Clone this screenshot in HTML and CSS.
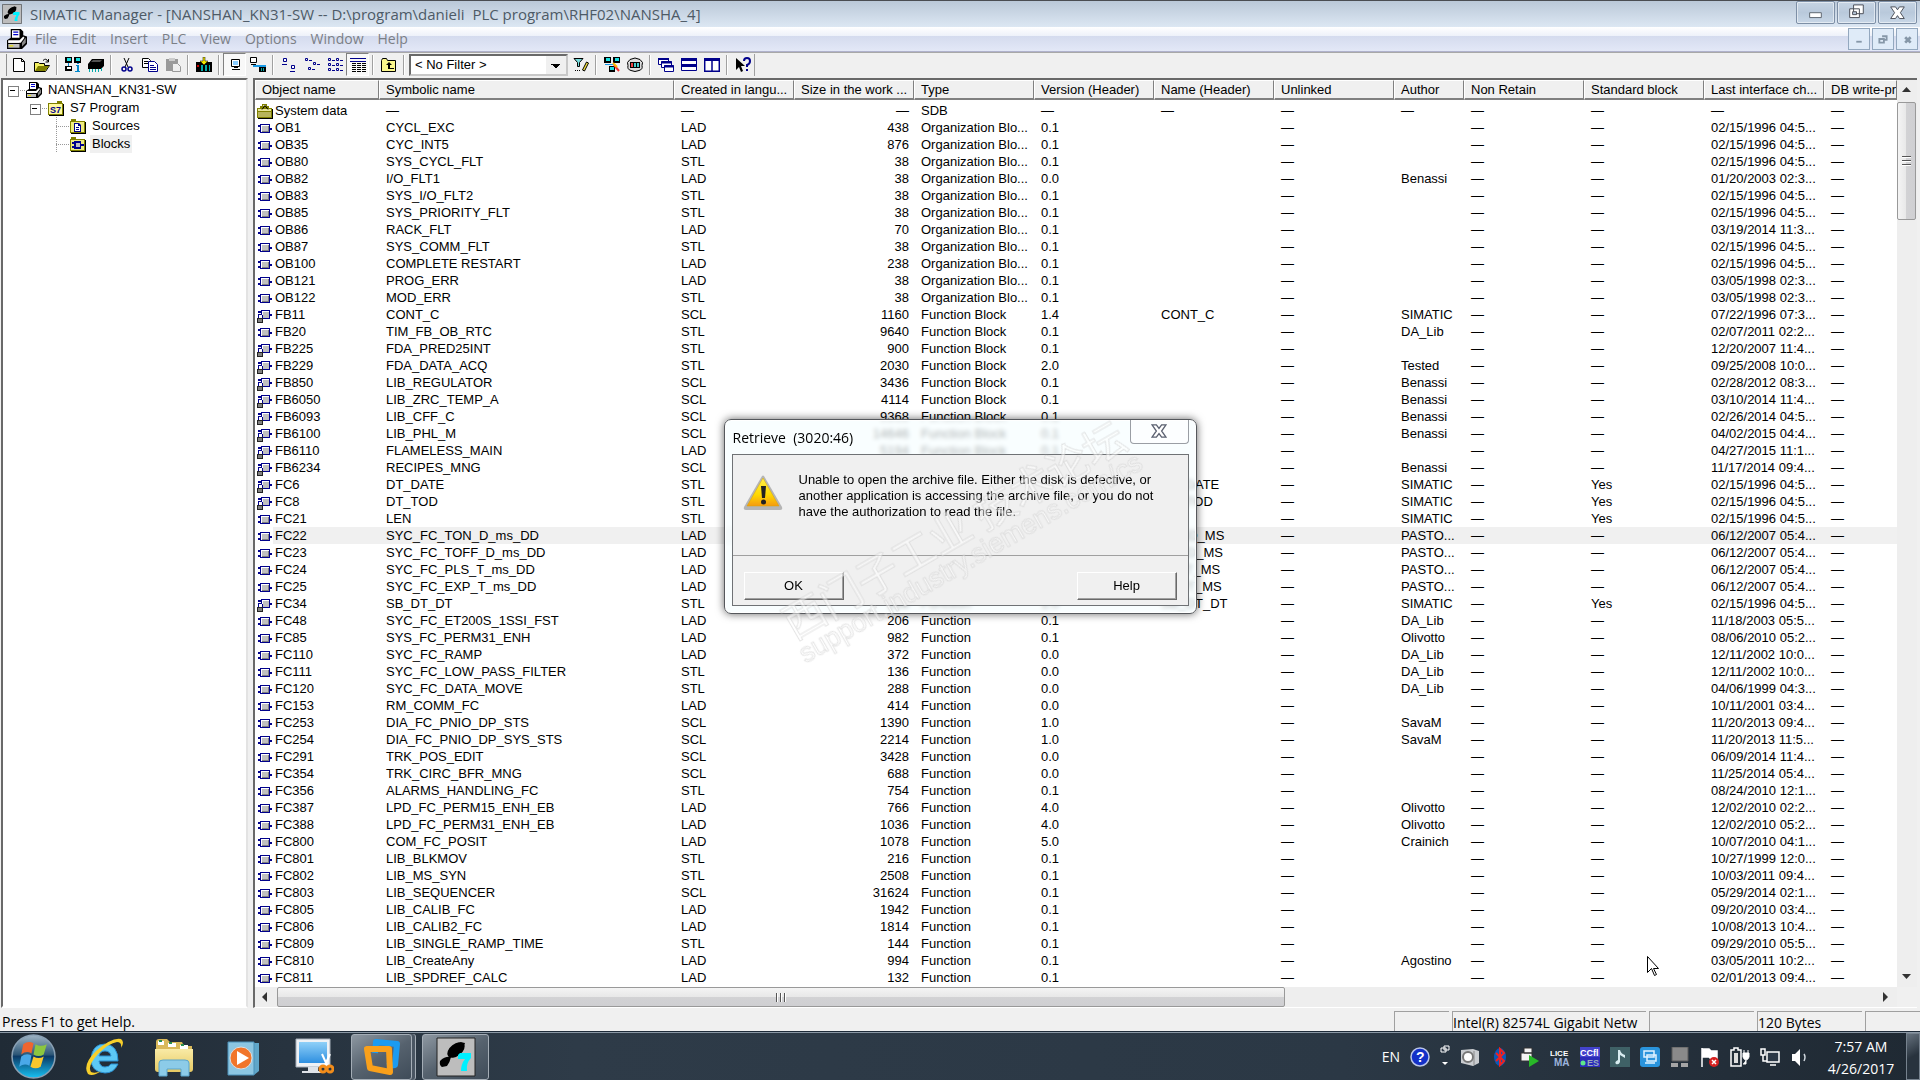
FILE: index.html
```
<!DOCTYPE html>
<html lang="en">
  <head>
    <meta charset="UTF-8" />
    <meta name="viewport" content="width=device-width, initial-scale=1.0" />
    <title>SIMATIC Manager</title>
    <link rel="stylesheet" href="styles.css">
  </head>
  <body>
    <!-- gradients -->
    <svg class="gradients" aria-hidden="true">
      <defs>
        <linearGradient id="gOrb" x1="0" y1="0" x2="0" y2="1">
          <stop offset="0" stop-color="#9fb4c4" /><stop offset=".45" stop-color="#2f5878" />
          <stop offset=".5" stop-color="#0c3a66" /><stop offset="1" stop-color="#17c3f5" />
        </linearGradient>
        <linearGradient id="gFold" x1="0" y1="0" x2="0" y2="1">
          <stop offset="0" stop-color="#f9eba6" /><stop offset="1" stop-color="#e6c963" />
        </linearGradient>
        <linearGradient id="gBlue" x1="0" y1="0" x2="0" y2="1">
          <stop offset="0" stop-color="#8fd0f8" /><stop offset="1" stop-color="#2e8fe0" />
        </linearGradient>
        <linearGradient id="gWarn" x1="0" y1="0" x2="0" y2="1">
          <stop offset="0" stop-color="#fff04a" /><stop offset=".6" stop-color="#ffd800" />
          <stop offset="1" stop-color="#f59a10" />
        </linearGradient>
      </defs>
    </svg>
    <!-- icon sprite -->
    <svg class="sprite" aria-hidden="true">
      <symbol id="i-block" viewBox="0 0 16 16">
        <path fill="#00008b" d="M3 4h10v9H3zM1 5h2v2H1zM1 10h2v2H1zM13 8h2v2h-2z" />
        <path fill="#fff" d="M4 5h8v7H4z" /><path fill="#808080" d="M5 6h7v6H5z" /><path fill="#c0c0c0" d="M5 6h6v5H5z" />
      </symbol>
      <symbol id="i-lock" viewBox="0 0 16 16">
        <path fill="#00008b" d="M4 3h9v9H4zM1 4h3v2H1zM13 7h2v2h-2z" />
        <path fill="#fff" d="M5 4h7v7H5z" /><path fill="#c0c0c0" d="M6 5h6v6H6z" />
        <path fill="#00008b" d="M1 7h4v1H1zM1 8h1v3H1zM5 8h1v3H5z" /><path fill="#fff" d="M2 8h3v3H2z" />
        <path fill="#222" d="M0 11h6v5H0z" /><path fill="#808080" d="M1 12h4v3H1z" />
      </symbol>
      <symbol id="i-sys" viewBox="0 0 16 16">
        <path fill="#000" d="M1 6h15v10H1z" /><path fill="#808000" d="M0 5h15v10H0zM3 3h9v3H3zM5 1h5v2H5z" />
        <path fill="#e8e49a" d="M1 6h13v2H1zM6 2h3v1H6z" /><path fill="#b8b45a" d="M1 9h13v5H1z" />
        <path stroke="#000" fill="none" d="M5 6.500l3-4 3 4" />
      </symbol>
      <symbol id="i-print" viewBox="0 0 16 16">
        <path fill="#000" d="M3 0h8l2 2v3l3 1v6l-4 4H0V9l3-2z" /><path fill="#fff" d="M4 1h6v6H4zM1 10h9v1H1z" />
        <path fill="#00c" d="M5 2h4v1H5zM5 4h4v1H5z" /><path fill="#fff" d="M1 9h9l3-3 1 1-3 4H1z" /><path fill="#c0c0c0" d="M1 12h9v3H1z" />
        <path fill="#e8e000" d="M2 13h3v1H2z" /><path fill="#888" d="M12 11l3-4v4l-3 3z" />
      </symbol>
      <symbol id="i-s7" viewBox="0 0 16 16">
        <path fill="#000" d="M1 4h15v12H1z" /><path fill="#808000" d="M0 3h15v12H0zM9 1h5v2H9z" /><path fill="#fff9a0" d="M1 4h13v10H1z" />
        <text x="2" y="13" font-size="9" font-weight="700" fill="#00008b" font-family="Liberation Sans, sans-serif">S7</text>
      </symbol>
      <symbol id="i-src" viewBox="0 0 16 16">
        <path fill="#000" d="M1 4h15v12H1z" /><path fill="#808000" d="M0 3h15v12H0zM1 1h5v2H1z" /><path fill="#f0ec80" d="M1 4h13v10H1z" />
        <path fill="#00008b" d="M4 5h5l2 2v7H4z" /><path fill="#fff" d="M5 6h3v2h2v5H5z" /><path fill="#00008b" d="M6 9h3v1H6zM6 11h3v1H6z" />
      </symbol>
      <symbol id="i-blk" viewBox="0 0 16 16">
        <path fill="#000" d="M1 4h15v12H1z" /><path fill="#808000" d="M0 3h15v12H0zM1 1h5v2H1z" /><path fill="#f0ec80" d="M1 4h13v10H1z" />
        <path fill="#00008b" d="M4 5h7v8H4zM2 6h2v2H2zM2 10h2v2H2zM11 8h3v2h-3z" /><path fill="#c0c0c0" d="M6 7h4v4H6z" />
      </symbol>
      <symbol id="i-app" viewBox="0 0 40 40">
        <path fill="#bdbdbd" stroke="#222" stroke-width="1" d="M1 1h38v38H1z" />
        <ellipse cx="20" cy="13" rx="10" ry="6" transform="rotate(-38 20 13)" />
        <path fill="#000" d="M24 5l5 1-2 6zM4 24q5-5 11-4-1 5-4 9l-5 1q-3-2-2-6z" />
        <path fill="#00f0ff" d="M22 18l2-2h11v5q-5 5-4 13h-6q0-7 4-12h-7z" />
      </symbol>
    </svg>

    <main class="window">
      <header class="titlebar">
        <svg class="app-icon"><use href="#i-app" /></svg>
        <h1 class="title">SIMATIC Manager - [NANSHAN_KN31-SW -- D:\program\danieli&nbsp; PLC program\RHF02\NANSHA_4]</h1>
        <div class="caption-buttons">
          <button type="button" aria-label="Minimize"><svg viewBox="0 0 38 22"><path d="M13 11h12v5H13z" fill="#fff" stroke="#5d6670" /></svg></button>
          <button type="button" aria-label="Restore"><svg viewBox="0 0 38 22"><path d="M16 3h10v9H16zM12 7h10v9H12z" fill="#fff" stroke="#4b4f58" /><path d="M15 10h4v3h-4z" fill="#b8c8da" stroke="#4b4f58" /></svg></button>
          <button type="button" aria-label="Close"><svg viewBox="0 0 38 22"><path d="M12 5h5l2 3 2-3h5l-4 6 4 6h-5l-2-3-2 3h-5l4-6z" fill="#fff" stroke="#4b4f58" /></svg></button>
        </div>
      </header>

      <nav class="menubar">
        <svg class="menu-icon"><use href="#i-print" /></svg>
        <button type="button">File</button>
        <button type="button">Edit</button>
        <button type="button">Insert</button>
        <button type="button">PLC</button>
        <button type="button">View</button>
        <button type="button">Options</button>
        <button type="button">Window</button>
        <button type="button">Help</button>
        <div class="child-buttons">
          <button type="button" aria-label="Minimize window"><svg viewBox="0 0 22 22"><path d="M8 13h6v2H8z" fill="#8697a8" /></svg></button>
          <button type="button" aria-label="Restore window"><svg viewBox="0 0 22 22"><path d="M10 8h5v4h-2M7 11h5v4H7z" fill="none" stroke="#8697a8" stroke-width="2" /></svg></button>
          <button type="button" aria-label="Close window"><svg viewBox="0 0 22 22"><path d="M9 9l6 6M15 9l-6 6" stroke="#8697a8" stroke-width="3" /></svg></button>
        </div>
      </nav>

      <div class="toolbar">
        <button type="button" aria-label="New"><svg viewBox="0 0 16 16"><path fill="#fff" stroke="#000" d="M2.500 1.500h8l3 3v10h-11zM10.500 1.500v3h3" /></svg></button>
        <button type="button" aria-label="Open"><svg viewBox="0 0 16 16"><path fill="#f4f060" stroke="#000" d="M.5 14.500v-9h4l1 1h5v2h5l-4 6z" /><path fill="#808000" d="M4 9h11l-4 5H1z" /><path fill="none" stroke="#000" d="M9 3.500q3-3 5 1M14.500 2v3h-3" /></svg></button>
        <span class="sep"></span>
        <button type="button" aria-label="Accessible nodes"><svg viewBox="0 0 16 16"><path fill="#000" d="M0 0h7v6H0zM9 0h7v6H9zM0 9h7v5H0z" /><path fill="#19e0e0" d="M2 1h4v3H2zM11 1h4v3h-4z" /><path fill="#fff" d="M2 10h4v2H2z" /><path fill="#08c" d="M3 6h1v3H3zM11 8h3v6h1v1h-5v-1h2V9h-1zM12 6h2v1h-2z" /></svg></button>
        <button type="button" aria-label="Memory card"><svg viewBox="0 0 16 16"><path fill="#000" d="M4 2h12v7l-3 3H0V7z" /><path fill="#0aa" d="M1 12h1v3H1zM4 12h1v3H4zM7 12h1v3H7zM10 12h1v3h-1zM13 11h1v3h-1z" /><path fill="#ccc" d="M5 3h9l-2 2H3z" opacity=".4" /></svg></button>
        <span class="sep"></span>
        <button type="button" aria-label="Cut"><svg viewBox="0 0 16 16"><path fill="none" stroke="#000" d="M5 1l4 9M10 1L6 10" /><g fill="none" stroke="#00008b" stroke-width="1.500"><circle cx="5" cy="12" r="2" /><circle cx="11" cy="12" r="2" /></g></svg></button>
        <button type="button" aria-label="Copy"><svg viewBox="0 0 16 16"><path fill="#fff" stroke="#000" d="M.5 1.500h6l2 2v7h-8z" /><path fill="#fff" stroke="#00008b" d="M6.500 4.500h6l3 3v7h-9z" /><path stroke="#00008b" d="M8 8.500h4M8 10.500h6M8 12.500h6" /><path stroke="#000" d="M2 4.500h4M2 6.500h4" /></svg></button>
        <button type="button" aria-label="Paste" disabled><svg viewBox="0 0 16 16"><path fill="#999" d="M1 2h12v12H1z" /><path fill="#ccc" d="M4 1h6v3H4z" /><path fill="#eee" stroke="#999" d="M7.500 6.500h5l3 3v5h-8z" /></svg></button>
        <span class="sep"></span>
        <button type="button" aria-label="Download"><svg viewBox="0 0 16 16"><path fill="#000" d="M0 5h16v10H0z" /><path fill="#0aa" d="M5 8h2v6H5zM9 8h2v6H9zM13 8h1v6h-1z" /><path fill="#c00" d="M1 8h2v2H1z" /><path fill="#f4e800" stroke="#000" stroke-width=".5" d="M7 0h2v4h3L8 8 4 4h3z" /></svg></button>
        <span class="sep"></span>
        <button type="button" aria-label="Offline" class="pressed"><svg viewBox="0 0 16 16"><path fill="#fff" stroke="#000" d="M4.500 2.500h8v7h-8z" /><path fill="#8cf" d="M6 4h5v4H6z" /><path stroke="#000" d="M7 10.500h4M5 12.500h8" /></svg></button>
        <button type="button" aria-label="Online"><svg viewBox="0 0 16 16"><path fill="#fff" stroke="#000" d="M.5.500h6v5h-6zM1 7.500h5" /><path fill="#1a9be8" d="M3 8h13v2H3z" /><path fill="#000" d="M9 10h7v5H9z" /><path fill="#0aa" d="M11 11h1v3h-1zM13 11h1v3h-1z" /></svg></button>
        <span class="sep"></span>
        <button type="button" aria-label="Large icons"><svg viewBox="0 0 16 16"><path fill="#fff" stroke="#00008b" d="M2.500 1.500h3v3h-3zM10.500 8.500h3v3h-3z" /><path stroke="#00008b" d="M1 7.500h5M9 14.500h5" /></svg></button>
        <button type="button" aria-label="Small icons"><svg viewBox="0 0 16 16"><path fill="none" stroke="#00008b" d="M1.500 1.500h2v2h-2zM9.500 5.500h2v2h-2zM4.500 10.500h2v2h-2z" /><path stroke="#00008b" d="M5 3.500h3M13 7.500h3M8 12.500h3" /></svg></button>
        <button type="button" aria-label="List"><svg viewBox="0 0 16 16"><path fill="none" stroke="#00008b" d="M1.500 1.500h2v2h-2zM9.500 1.500h2v2h-2zM1.500 6.500h2v2h-2zM9.500 6.500h2v2h-2zM1.500 11.500h2v2h-2zM9.500 11.500h2v2h-2z" /><path stroke="#00008b" d="M5 3.500h3M13 3.500h3M5 8.500h3M13 8.500h3M5 13.500h3M13 13.500h3" /></svg></button>
        <button type="button" aria-label="Details" class="pressed"><svg viewBox="0 0 16 16"><path stroke="#00008b" d="M0 1.500h16M0 4.500h16" /><path stroke="#000" stroke-dasharray="4 1" d="M2 6.500h14M2 8.500h14M2 10.500h14M2 12.500h14M2 14.500h14" /></svg></button>
        <span class="sep"></span>
        <button type="button" aria-label="Up one level"><svg viewBox="0 0 16 16"><path fill="#fbf78c" stroke="#000" d="M.5 14.500v-11l1-2h4l1 2h8v11z" /><path fill="#000" d="M8 5l3 3H9v3h4v1H7V8H5z" /></svg></button>
        <span class="sep"></span>
        <select class="filter" aria-label="Filter"><option>&lt; No Filter &gt;</option></select>
        <button type="button" aria-label="Edit filter"><svg viewBox="0 0 16 16"><path fill="#7dd" stroke="#000" d="M1 1.500h9l-3.500 4v4h-2v-4z" /><path stroke="#000" stroke-dasharray="1 1" d="M2 13.500h6" /><path fill="#f4e040" stroke="#000" d="M9.500 13l4-8 2 1-4 8z" /></svg></button>
        <span class="sep"></span>
        <button type="button" aria-label="Configure network"><svg viewBox="0 0 16 16"><path fill="#000" d="M0 0h7v6H0zM9 0h7v6H9zM5 9h6v6H5z" /><path fill="#19e0e0" d="M2 1h4v3H2zM11 1h4v3h-4zM6 10h4v3H6z" /><path fill="#1a9be8" d="M1 7h9v1H1z" /><path stroke="#e33" stroke-width="2" d="M10 8l5 6" /><path stroke="#fb0" stroke-width="2" d="M9 6l4 4" /></svg></button>
        <button type="button" aria-label="Simulate modules"><svg viewBox="0 0 16 16"><path fill="#ddd" stroke="#000" d="M3 2.500q5-3 10 0 4 3 2 6 1 4-3 5-4 2-8 0-4-1-3-5-2-3 2-6z" /><path fill="#000" d="M3 5h10v6H3z" /><path fill="#e44" d="M4 6h2v4H4z" /><path fill="#4cc" d="M7 6h2v4H7zM10 6h2v4h-2z" /></svg></button>
        <span class="sep"></span>
        <button type="button" aria-label="Cascade"><svg viewBox="0 0 16 16"><g fill="#fff" stroke="#00008b"><path d="M.5 1.500h10v6H.5z" /><path d="M3.500 4.500h10v6h-10z" /><path d="M6.500 8.500h9v6h-9z" /></g><path stroke="#00008b" stroke-width="2" d="M0 2h11M3 5.500h11M6 9.500h10" /></svg></button>
        <button type="button" aria-label="Tile horizontally"><svg viewBox="0 0 16 16"><path fill="#fff" stroke="#00008b" d="M.5 1.500h15v12H.5z" /><path stroke="#00008b" stroke-width="3" d="M0 2.500h16M0 8.500h16" /></svg></button>
        <button type="button" aria-label="Tile vertically"><svg viewBox="0 0 16 16"><path fill="#fff" stroke="#00008b" stroke-width="1.500" d="M.7 1.700h14.600v12.600H.7zM8 2v12" /><path stroke="#00008b" stroke-width="3" d="M0 2.500h16" /></svg></button>
        <span class="sep"></span>
        <button type="button" aria-label="Context help"><svg viewBox="0 0 16 16"><path fill="#000" d="M1 1v12l3-3 2 5 2-1-2-5h4z" /><path fill="none" stroke="#00008b" stroke-width="2" d="M9 4q0-3 3-3t3 3-3 4v2M12 12v2" /></svg></button>
        <span class="toolbar-end"></span>
      </div>

      <section class="workspace">
        <aside class="tree-pane">
          <ul class="tree">
            <li>
              <div class="node root"><span class="expander"></span><svg><use href="#i-print" /></svg><span class="label">NANSHAN_KN31-SW</span></div>
              <ul>
                <li>
                  <div class="node"><span class="expander"></span><svg><use href="#i-s7" /></svg><span class="label">S7 Program</span></div>
                  <ul class="leaves">
                    <li><div class="node"><span class="twig"></span><svg><use href="#i-src" /></svg><span class="label">Sources</span></div></li>
                    <li><div class="node"><span class="twig"></span><svg><use href="#i-blk" /></svg><span class="label selected">Blocks</span></div></li>
                  </ul>
                </li>
              </ul>
            </li>
          </ul>
        </aside>

        <div class="list-pane">
          <div class="list-body">
            <div class="list-view">
              <table class="blocks">
                <colgroup>
                  <col class="c-object"><col class="c-symbol"><col class="c-std"><col class="c-std"><col class="c-std">
                  <col class="c-std"><col class="c-std"><col class="c-std"><col class="c-author"><col class="c-std">
                  <col class="c-std"><col class="c-std"><col>
                </colgroup>
                <thead>
                  <tr>
                    <th>Object name</th><th>Symbolic name</th><th>Created in langu...</th><th>Size in the work ...</th><th>Type</th>
                    <th>Version (Header)</th><th>Name (Header)</th><th>Unlinked</th><th>Author</th><th>Non Retain</th>
                    <th>Standard block</th><th>Last interface ch...</th><th>DB write-pr</th>
                  </tr>
                </thead>
                <tbody id="blockRows"></tbody>
              </table>
            </div>
            <div class="hscroll">
              <span class="arrow"><svg viewBox="0 0 20 20"><path d="M12 5v10L7 10z" fill="#333" /></svg></span>
              <div class="htrack"><div class="hthumb"><i></i><i></i><i></i></div></div>
              <span class="arrow"><svg viewBox="0 0 20 20"><path d="M6 5v10l5-5z" fill="#333" /></svg></span>
            </div>
          </div>
          <div class="vscroll">
            <span class="arrow"><svg viewBox="0 0 20 20"><path d="M5 12h9L9.500 7z" fill="#333" /></svg></span>
            <div class="vtrack"><div class="vthumb"><i></i><i></i><i></i></div></div>
            <span class="arrow"><svg viewBox="0 0 20 20"><path d="M5 7h9l-4.500 5z" fill="#333" /></svg></span>
            <span class="corner"></span>
          </div>
        </div>
      </section>

      <footer class="statusbar">
        <span class="hint">Press F1 to get Help.</span>
        <span class="panel narrow"></span>
        <span class="panel adapter">Intel(R) 82574L Gigabit Netw</span>
        <span class="panel"></span>
        <span class="panel">120 Bytes</span>
        <span class="panel narrow"></span>
      </footer>

      <div class="dialog-layer">
        <div class="dialog" role="dialog" aria-labelledby="dlgTitle">
          <div class="dialog-title">
            <h2 id="dlgTitle">Retrieve&nbsp; (3020:46)</h2>
            <button type="button" class="dialog-close" aria-label="Close dialog"><svg viewBox="0 0 18 16"><path d="M1 1h5l3 4 3-4h5l-5 7 5 7h-5l-3-4-3 4H1l5-7z" fill="#fff" stroke="#5a6070" stroke-width="1.500" /></svg></button>
          </div>
          <div class="dialog-body">
            <div class="message">
              <svg class="warn" viewBox="0 0 40 36"><path d="M19 1q1-1 2 0l18 31q1 3-2 3H3q-3 0-2-3z" fill="#b5b5b5" /><path d="M20 3L36 31H4z" fill="url(#gWarn)" stroke="#d9a400" stroke-width=".5" /><path d="M18 11h5l-1 12h-3z" fill="#222" /><circle cx="20.500" cy="27" r="2.500" fill="#222" /></svg>
              <p>Unable to open the archive file. Either the disk is defective, or another application is accessing the archive file, or you do not have the authorization to read the file.</p>
            </div>
            <div class="actions">
              <button type="button">OK</button>
              <button type="button">Help</button>
            </div>
          </div>
        </div>
      </div>
    </main>

    <footer class="taskbar">
      <button type="button" class="start" aria-label="Start"><svg viewBox="0 0 44 44"><circle cx="22" cy="22" r="21" fill="url(#gOrb)" stroke="#8aa0b4" stroke-width="1.500" /><path d="M12 10q5-4 10-1l-2 10q-5-3-10 1z" fill="#f0652f" /><path d="M24 10q5 3 11 0l-3 10q-5 3-10 0z" fill="#8cc63f" /><path d="M10 22q5-4 10-1l-2 10q-5-3-10 1z" fill="#4aa8e8" /><path d="M22 22q5 3 10 0l-3 10q-5 3-10 0z" fill="#fbc72e" /></svg></button>
      <button type="button" class="pin" aria-label="Internet Explorer"><svg viewBox="0 0 40 40"><path d="M34 24H15q1 6 6 6 4 0 6-3h7q-4 9-13 9Q7 35 7 22 8 7 21 7q13 1 13 17zM15 19h12q-1-5-6-5t-6 5z" fill="#5cc8f5" stroke="#2b8fd0" /><path d="M4 37Q-2 28 12 14 28 0 37 2q4 3 0 9 1-6-4-6Q25 6 14 17 3 29 7 35q4 2 10-1-8 6-13 3z" fill="#f7cf2b" /></svg></button>
      <button type="button" class="pin" aria-label="Explorer"><svg viewBox="0 0 40 40"><path d="M2 5q0-3 3-3h8l3 3h12l2 4h8v24H2z" fill="#d9b95a" /><path d="M4 4h6v4H4zM14 6h8v4h-8zM26 8h8v4h-8z" fill="#fff" /><path d="M5 3h3v2H5zM15 5h3v2h-3zM27 7h3v2h-3z" fill="#2a8f50" /><path d="M1 12h38v20q0 3-3 3H4q-3 0-3-3z" fill="url(#gFold)" /><path d="M5 26q0-3 4-3h22q4 0 4 3v13h-8v-7H13v7H5z" fill="#8ccbe8" stroke="#5aa5cc" /></svg></button>
      <button type="button" class="pin" aria-label="Media Player"><svg viewBox="0 0 40 40"><path d="M12 6h23v28l-5 4H12z" fill="#5fa6c9" /><path d="M4 5h26v33H4z" fill="#8cc6e2" stroke="#4a90b8" /><circle cx="17" cy="21" r="11" fill="#f1752a" stroke="#d9dfe4" /><path d="M13 14l12 7-12 7z" fill="#fff" /></svg></button>
      <button type="button" class="pin" aria-label="Snipping Tool"><svg viewBox="0 0 40 40"><path d="M2 2h34v28H2z" fill="#eef1f5" stroke="#a6afba" /><path d="M5 5h28v21H5z" fill="url(#gBlue)" /><path d="M14 30h10v4h6v2H8v-2h6z" fill="#dfe3e8" /><path d="M28 17l5 11M36 17l-5 11" stroke="#fff" stroke-width="2" /><g fill="none" stroke="#f28c1a" stroke-width="3"><circle cx="29" cy="32" r="3" /><circle cx="36" cy="32" r="3" /></g></svg></button>
      <button type="button" class="task stacked" aria-label="VMware"><svg viewBox="0 0 40 40"><g fill="none" stroke-width="6" stroke-linejoin="round"><path d="M13 16l1-11 21 2-2 21-8 1" stroke="#1b9bf0" /><path d="M5 12h22l1 23-20-4z" stroke="#f9a01b" /></g></svg></button>
      <button type="button" class="task" aria-label="SIMATIC Manager"><svg viewBox="0 0 40 40"><use href="#i-app" /></svg></button>

      <div class="tray">
        <span class="lang">EN</span>
        <svg class="tray-icon" viewBox="0 0 20 20"><circle cx="10" cy="10" r="9" fill="#1330c8" stroke="#b9c4e8" stroke-width="1.500" /><text x="6" y="15" font-size="14" font-weight="700" fill="#fff" font-family="Liberation Sans, sans-serif">?</text></svg>
        <svg class="tray-mini" viewBox="0 0 10 24"><path d="M4 1h5v4H4zM1 3h5v4H1z" fill="#2c3846" stroke="#fff" /><path d="M2 17h6l-3 3z" fill="#fff" /></svg>
        <svg class="tray-icon" viewBox="0 0 20 20"><path d="M1 3l12-1 6 2v12l-6 3-12-3z" fill="#c9ccd0" /><circle cx="8" cy="10" r="5" fill="#fff" stroke="#777" stroke-width="2" /><path d="M14 4v14" stroke="#888" /></svg>
        <svg class="tray-icon" viewBox="0 0 20 20"><ellipse cx="10" cy="10" rx="6" ry="9" fill="#0a58b8" /><path d="M6 6l8 8-4 4V2l4 4-8 8" fill="none" stroke="#e22" stroke-width="2" /></svg>
        <svg class="tray-icon" viewBox="0 0 20 20"><path d="M4 1h8v5H4zM1 6h11v8H1z" fill="#f4f4f4" stroke="#333" /><path d="M9 8l10 6-10 6z" fill="#28b828" /></svg>
        <svg class="tray-icon" viewBox="0 0 20 20"><text x="0" y="9" font-size="8" font-weight="700" fill="#fff" font-family="Liberation Sans, sans-serif">LICE</text><text x="4" y="19" font-size="10" font-weight="700" fill="#9db4dc" font-family="Liberation Sans, sans-serif">MA</text></svg>
        <svg class="tray-icon" viewBox="0 0 20 20"><path d="M0 0h20v20H0z" fill="#2b2bb8" /><path d="M0 0h20v10H0z" fill="#4343cc" /><text x="0" y="9" font-size="9" font-weight="700" fill="#fff" font-family="Liberation Sans, sans-serif">CCfl</text><text x="7" y="19" font-size="9" font-weight="700" fill="#9ab" font-family="Liberation Sans, sans-serif">ES</text><circle cx="3" cy="16" r="2.500" fill="#5fe88a" /></svg>
        <svg class="tray-icon" viewBox="0 0 20 20"><path d="M0 0h20v20H0z" fill="#3f6166" /><path d="M8 3h2q1 4 5 5v3l-5-3v7q-1 3-4 2-2-2 2-4z" fill="#d8ecf0" /></svg>
        <svg class="tray-icon" viewBox="0 0 20 20"><rect width="20" height="20" rx="3" fill="#2a94dc" /><path d="M4 4h10v6H4zM7 8h9v6H7zM5 16h10" fill="none" stroke="#dff2ff" stroke-width="1.500" /></svg>
        <svg class="tray-icon" viewBox="0 0 20 20"><path d="M2 0h16v14H2z" fill="#8a8a8a" stroke="#5a5a5a" /><path d="M1 16h7v4H1zM11 16h7v4h-7z" fill="#a5a5a5" /></svg>
        <svg class="tray-icon" viewBox="0 0 20 20"><path d="M2 1v19M3 2h6l2 2h6v8h-6l-2-2H3z" fill="#fff" stroke="#fff" stroke-width="1.500" /><circle cx="14" cy="15" r="5" fill="#d62222" /><path d="M12 13l4 4M16 13l-4 4" stroke="#fff" stroke-width="1.500" /></svg>
        <svg class="tray-icon" viewBox="0 0 20 20"><path d="M4 1h4v2h3v16H1V3h3z" fill="none" stroke="#fff" stroke-width="1.500" /><path d="M4 6h4v10H4z" fill="#ddd" /><path d="M13 6h6v4q-1 3-3 3-2 0-3-3zM14 3v3M18 3v3M16 13v4h-3" fill="#fff" stroke="#fff" /></svg>
        <svg class="tray-icon" viewBox="0 0 20 20"><path d="M1 2h4v6H1zM3 8v6h4" fill="none" stroke="#fff" stroke-width="1.500" /><path d="M7 5h12v10H7zM10 18h6" fill="#2c3846" stroke="#fff" stroke-width="1.500" /></svg>
        <svg class="tray-icon" viewBox="0 0 20 20"><path d="M2 7h3l5-5v17l-5-5H2z" fill="#fff" /><path d="M14 7q2 3 0 7" fill="none" stroke="#cfd6dd" stroke-width="1.500" /></svg>
      </div>
      <div class="clock"><span>7:57 AM</span><span>4/26/2017</span></div>
      <button type="button" class="show-desktop" aria-label="Show desktop"></button>
    </footer>

    <div class="watermark"><span class="wm-cn" lang="zh">西门子工业 技术论坛</span><span class="wm-url">support.industry.siemens.com/cs</span></div>
    <svg class="pointer" viewBox="0 0 12 20"><path d="M.5.500v16l4-4 3 7 2-1-3-6h5z" fill="#fff" stroke="#000" /></svg>

    <script src="script.js"></script>
  </body>
</html>
```
FILE: styles.css
```
* {
  box-sizing: border-box;
}
body {
  margin: 0;
  height: 100vh;
  display: flex;
  flex-direction: column;
  position: relative;
  overflow: hidden;
  background: #f0f0f0;
  color: #000;
  font: 13px/17px "Liberation Sans", Arial, sans-serif;
}
button {
  margin: 0;
  padding: 0;
  border: 0;
  background: none;
  font: inherit;
  color: inherit;
}
svg {
  display: block;
}
ul {
  list-style: none;
  margin: 0;
  padding: 0;
}
.gradients {
  position: absolute;
  width: 0;
  height: 0;
}
.sprite {
  display: none;
}

/* main window */
.window {
  flex: 1;
  min-height: 0;
  display: flex;
  flex-direction: column;
  position: relative;
}
.titlebar {
  display: flex;
  align-items: center;
  height: 27px;
  padding: 0 3px 0 2px;
  border-top: 1px solid #4a4d52;
  background: linear-gradient(#bac8d8, #dce7f3);
}
.app-icon {
  width: 20px;
  height: 20px;
}
.title {
  flex: 1;
  margin: 0 0 0 8px;
  font: 15px/20px "Open Sans", "Noto Sans", sans-serif;
  color: #4d5a66;
}
.caption-buttons {
  display: flex;
  gap: 2px;
  align-self: flex-start;
}
.caption-buttons button {
  width: 39px;
  height: 23px;
  border: 1px solid #7d8fa6;
  border-radius: 2px;
  background: linear-gradient(#c6d4e3, #b9c9db 50%, #c8d7e7);
  box-shadow: inset 0 0 0 1px rgba(255, 255, 255, 0.5);
}
.menubar {
  display: flex;
  align-items: center;
  gap: 14px;
  height: 25px;
  padding: 0 2px 0 7px;
  border-bottom: 1px solid #b0b2cc;
  background: linear-gradient(#fff, #eef2fa 36%, #d4dbee 37%, #e3e8f7);
  font: 14px/22px "Open Sans", "Noto Sans", sans-serif;
  color: #7b7f86;
}
.menu-icon {
  width: 20px;
  height: 20px;
  margin-right: -6px;
}
.child-buttons {
  display: flex;
  gap: 2px;
  margin-left: auto;
}
.child-buttons button {
  width: 22px;
  height: 22px;
  border: 1px solid #93a8bf;
  background: #dfebf8;
}
.toolbar {
  display: flex;
  align-items: center;
  height: 26px;
  padding: 0 0 2px 3px;
  border-top: 1px solid #a8a8a8;
}
.toolbar::before {
  content: "";
  width: 3px;
  height: 22px;
  border-right: 1px solid #909090;
}
.toolbar button {
  display: flex;
  align-items: center;
  justify-content: center;
  width: 23px;
  height: 23px;
}
.toolbar button svg {
  width: 16px;
  height: 16px;
}
.toolbar .pressed {
  border: 1px solid;
  border-color: #808080 #fff #fff #808080;
  background: #f8f8f8;
}
.sep {
  width: 2px;
  height: 20px;
  margin: 0 3px;
  border-left: 1px solid #a0a0a0;
  border-right: 1px solid #fff;
}
.filter {
  width: 159px;
  height: 22px;
  margin: 0 1px 0 1px;
  padding: 0 4px;
  appearance: none;
  border: 2px solid;
  border-color: #696969 #c8c8c8 #c8c8c8 #696969;
  border-radius: 0;
  background:
    linear-gradient(45deg, transparent 50%, #000 50%) right 10px top 8px / 5px 5px no-repeat,
    linear-gradient(-45deg, transparent 50%, #000 50%) right 5px top 8px / 5px 5px no-repeat,
    linear-gradient(#f0f0f0, #f0f0f0) right / 20px 100% no-repeat,
    #fff;
  color: #000;
  font: 13px/18px "Liberation Sans", Arial, sans-serif;
}
.toolbar-end {
  width: 1px;
  height: 22px;
  background: #a0a0a0;
}

/* project tree and block list */
.workspace {
  flex: 1;
  min-height: 0;
  display: flex;
  gap: 5px;
  padding: 0 3px 1px 1px;
}
.tree-pane,
.list-pane {
  border: 2px solid;
  border-color: #696969 #e3e3e3 #fff #696969;
  background: #fff;
}
.tree-pane {
  width: 247px;
  padding: 1px 0 0 5px;
}
.node {
  display: flex;
  align-items: center;
  height: 18px;
}
.node svg {
  width: 16px;
  height: 16px;
}
.node .label {
  margin-left: 4px;
  padding: 0 2px;
  line-height: 18px;
}
.node .selected {
  background: #f0f0f0;
}
.tree ul {
  padding-left: 22px;
}
.tree .leaves {
  margin-left: 26px;
  padding-left: 0;
  background: linear-gradient(#999 50%, transparent 50%) 0 0 / 1px 2px repeat-y;
  background-clip: content-box;
}
.expander {
  width: 18px;
  height: 9px;
  background: linear-gradient(90deg, #999 50%, transparent 50%) 10px 4px / 2px 1px repeat-x;
  position: relative;
}
.expander::before {
  content: "";
  position: absolute;
  left: 0;
  top: 0;
  width: 9px;
  height: 9px;
  border: 1px solid #808080;
  background: linear-gradient(#000, #000) 1px 3px / 5px 1px no-repeat #fff;
}
.twig {
  width: 14px;
  height: 1px;
  background: linear-gradient(90deg, #999 50%, transparent 50%) 0 0 / 2px 1px repeat-x;
}
.list-pane {
  flex: 1;
  min-width: 0;
  display: flex;
  border-right-width: 0;
  border-bottom-width: 1px;
}
.list-body {
  flex: 1;
  min-width: 0;
  display: flex;
  flex-direction: column;
}
.list-view {
  flex: 1;
  min-height: 0;
  overflow: hidden;
}
.blocks {
  width: 100%;
  table-layout: fixed;
  border-collapse: separate;
  border-spacing: 0;
}
.c-object {
  width: 124px;
}
.c-symbol {
  width: 295px;
}
.c-std {
  width: 120px;
}
.c-author {
  width: 70px;
}
.blocks th {
  height: 20px;
  padding: 0 0 0 6px;
  border-top: 1px solid #fff;
  border-left: 1px solid #fff;
  border-right: 1px solid #808080;
  border-bottom: 2px solid #808080;
  background: #f0f0f0;
  font-weight: normal;
  text-align: left;
  white-space: nowrap;
  overflow: hidden;
}
.blocks td {
  height: 17px;
  padding: 0 0 0 7px;
  white-space: nowrap;
  overflow: hidden;
}
.blocks tbody::before {
  content: "";
  display: table-row;
  height: 2px;
}
.blocks .object {
  display: flex;
  align-items: center;
  padding-left: 2px;
}
.blocks .object svg {
  width: 16px;
  height: 16px;
}
.blocks .object span {
  flex: 1;
  padding-left: 2px;
}
.blocks .size {
  padding: 0 5px 0 0;
  text-align: right;
}
.blocks .current td:not(.object),
.blocks .current .object span {
  background: #f0f0f0;
}
.hscroll {
  display: flex;
  height: 20px;
  background: #eee;
}
.arrow {
  width: 20px;
  height: 20px;
}
.htrack {
  flex: 1;
  display: flex;
  padding-left: 2px;
}
.hthumb,
.vthumb {
  display: flex;
  align-items: center;
  justify-content: center;
  gap: 2px;
  border: 1px solid #999;
  border-radius: 2px;
}
.hthumb {
  width: 63%;
  background: linear-gradient(#f4f4f4, #e8e8e8 48%, #d2d2d4 50%, #cfcfd2);
}
.hthumb i {
  width: 2px;
  height: 9px;
  border-left: 1px solid #555;
  border-right: 1px solid #fff;
}
.vscroll {
  width: 20px;
  display: flex;
  flex-direction: column;
  background: #eee;
}
.vtrack {
  flex: 1;
  padding-top: 2px;
}
.vthumb {
  flex-direction: column;
  width: 19px;
  height: 118px;
  background: linear-gradient(90deg, #f4f4f4, #e8e8e8 48%, #d2d2d4 50%, #cfcfd2);
}
.vthumb i {
  width: 9px;
  height: 2px;
  border-top: 1px solid #555;
  border-bottom: 1px solid #fff;
}
.corner {
  height: 20px;
  background: #f0f0f0;
}

.statusbar {
  display: flex;
  gap: 3px;
  height: 23px;
  padding-top: 2px;
  font: 14px/21px "Open Sans", "Noto Sans", sans-serif;
}
.hint {
  flex: 1;
  padding-left: 2px;
}
.panel {
  width: 105px;
  height: 20px;
  border-top: 1px solid #a0a0a0;
  border-left: 1px solid #a0a0a0;
  white-space: nowrap;
  overflow: hidden;
}
.panel.narrow {
  width: 55px;
}
.panel.adapter {
  width: 194px;
}

/* message box */
.dialog-layer {
  position: absolute;
  inset: 0;
  display: flex;
  align-items: center;
  justify-content: center;
}
.dialog {
  width: 473px;
  padding: 0 7px 7px;
  border: 1px solid #55585c;
  border-radius: 7px;
  background: rgba(246, 253, 255, 0.7);
  backdrop-filter: blur(2px);
  box-shadow: 0 0 8px rgba(0, 0, 0, 0.6), inset 0 0 0 1px #fff;
}
.dialog-title {
  display: flex;
  justify-content: space-between;
  height: 34px;
}
.dialog-title h2 {
  margin: 7px 0 0 1px;
  font: 14px/22px "Open Sans", "Noto Sans", sans-serif;
}
.dialog-close {
  display: flex;
  align-items: center;
  justify-content: center;
  width: 59px;
  height: 24px;
  border: 1px solid #9a9ea4;
  border-top: 0;
  border-radius: 0 0 4px 4px;
  background: rgba(255, 255, 255, 0.6);
}
.dialog-close svg {
  width: 16px;
  height: 14px;
}
.dialog-body {
  border: 1px solid #6f7275;
  background: #f0f0f0;
}
.message {
  display: flex;
  gap: 16px;
  height: 101px;
  padding: 17px 15px 0 10px;
  border-bottom: 1px solid #a0a0a0;
}
.message p {
  flex: 1;
  margin: 0;
  line-height: 16px;
}
.warn {
  width: 40px;
  height: 36px;
  margin-top: 3px;
}
.actions {
  display: flex;
  justify-content: space-between;
  padding: 16px 11px 5px;
}
.actions button {
  width: 100px;
  height: 28px;
  border: 1px solid;
  border-color: #fff #696969 #696969 #fff;
  box-shadow: inset -1px -1px 0 #a0a0a0;
}

/* taskbar */
.taskbar {
  display: flex;
  align-items: center;
  height: 48px;
  padding-left: 11px;
  border-top: 1px solid #8b98a5;
  background: linear-gradient(90deg, #202b36, #2e3b48 30%, #2b3845 70%, #1f2933);
  box-shadow: 0 -1px 0 #1d2a38;
  color: #fff;
}
.start svg {
  width: 45px;
  height: 45px;
}
.pin {
  width: 70px;
  padding-left: 13px;
}
.start + .pin {
  margin-left: 15px;
}
.pin svg,
.task svg {
  width: 40px;
  height: 40px;
}
.task {
  display: flex;
  align-items: center;
  justify-content: center;
  width: 67px;
  height: 46px;
  margin-left: 5px;
  border: 1px solid #a4adb6;
  border-radius: 3px;
  background: linear-gradient(150deg, #8d97a1, #56626e 50%, #3f4c59);
}
.task.stacked {
  width: 61px;
  margin: 0 5px 0 0;
  box-shadow: 3px 0 0 #4a5663, 4px 0 0 #a4adb6;
}
.tray {
  display: flex;
  align-items: center;
  gap: 10px;
  height: 100%;
  margin-left: auto;
}
.tray-icon {
  width: 20px;
  height: 20px;
}
.tray-mini {
  width: 10px;
  height: 24px;
}
.lang {
  font: 14px/20px "Open Sans", "Noto Sans", sans-serif;
}
.clock {
  display: flex;
  flex-direction: column;
  align-items: center;
  width: 96px;
  padding: 2px 0 0 6px;
  font: 14px/22px "Open Sans", "Noto Sans", sans-serif;
}
.show-desktop {
  width: 14px;
  height: 47px;
  border: 1px solid #76828e;
  background: linear-gradient(150deg, #66727e, #28333e 50%);
}

/* forum watermark across the screen */
.watermark {
  position: absolute;
  top: 50%;
  left: 50%;
  display: flex;
  flex-direction: column;
  align-items: center;
  transform: translate(-50%, -50%) rotate(-30deg);
  color: rgba(255, 255, 255, 0.5);
  -webkit-text-stroke: 1px rgba(190, 190, 190, 0.4);
  white-space: nowrap;
  pointer-events: none;
}
.wm-cn {
  font: 42px/42px "Noto Sans CJK SC", sans-serif;
}
.wm-url {
  font: 27px/28px "Liberation Sans", Arial, sans-serif;
}
.pointer {
  position: absolute;
  left: 1647px;
  top: 956px;
  width: 12px;
  height: 20px;
}
```
FILE: script.js
```
// icon, object, symbol, language, size, type, version, name, author, standard, interface date
const OB = "Organization Blo...";
const FB = "Function Block";
const FC = "Function";
const blocks = [
  ["i-block", "OB1", "CYCL_EXC", "LAD", 438, OB, "0.1", "", "", "—", "02/15/1996 04:5..."],
  ["i-block", "OB35", "CYC_INT5", "LAD", 876, OB, "0.1", "", "", "—", "02/15/1996 04:5..."],
  ["i-block", "OB80", "SYS_CYCL_FLT", "STL", 38, OB, "0.1", "", "", "—", "02/15/1996 04:5..."],
  ["i-block", "OB82", "I/O_FLT1", "LAD", 38, OB, "0.0", "", "Benassi", "—", "01/20/2003 02:3..."],
  ["i-block", "OB83", "SYS_I/O_FLT2", "STL", 38, OB, "0.1", "", "", "—", "02/15/1996 04:5..."],
  ["i-block", "OB85", "SYS_PRIORITY_FLT", "STL", 38, OB, "0.1", "", "", "—", "02/15/1996 04:5..."],
  ["i-block", "OB86", "RACK_FLT", "LAD", 70, OB, "0.1", "", "", "—", "03/19/2014 11:3..."],
  ["i-block", "OB87", "SYS_COMM_FLT", "STL", 38, OB, "0.1", "", "", "—", "02/15/1996 04:5..."],
  ["i-block", "OB100", "COMPLETE RESTART", "LAD", 238, OB, "0.1", "", "", "—", "02/15/1996 04:5..."],
  ["i-block", "OB121", "PROG_ERR", "LAD", 38, OB, "0.1", "", "", "—", "03/05/1998 02:3..."],
  ["i-block", "OB122", "MOD_ERR", "STL", 38, OB, "0.1", "", "", "—", "03/05/1998 02:3..."],
  ["i-lock", "FB11", "CONT_C", "SCL", 1160, FB, "1.4", "CONT_C", "SIMATIC", "—", "07/22/1996 07:3..."],
  ["i-block", "FB20", "TIM_FB_OB_RTC", "STL", 9640, FB, "0.1", "", "DA_Lib", "—", "02/07/2011 02:2..."],
  ["i-lock", "FB225", "FDA_PRED25INT", "STL", 900, FB, "0.1", "", "", "—", "12/20/2007 11:4..."],
  ["i-lock", "FB229", "FDA_DATA_ACQ", "STL", 2030, FB, "2.0", "", "Tested", "—", "09/25/2008 10:0..."],
  ["i-lock", "FB850", "LIB_REGULATOR", "SCL", 3436, FB, "0.1", "", "Benassi", "—", "02/28/2012 08:3..."],
  ["i-lock", "FB6050", "LIB_ZRC_TEMP_A", "SCL", 4114, FB, "0.1", "", "Benassi", "—", "03/10/2014 11:4..."],
  ["i-lock", "FB6093", "LIB_CFF_C", "SCL", 9368, FB, "0.1", "", "Benassi", "—", "02/26/2014 04:5..."],
  ["i-lock", "FB6100", "LIB_PHL_M", "SCL", 14646, FB, "0.1", "", "Benassi", "—", "04/02/2015 04:4..."],
  ["i-lock", "FB6110", "FLAMELESS_MAIN", "LAD", 5194, FB, "0.1", "", "", "—", "04/27/2015 11:1..."],
  ["i-lock", "FB6234", "RECIPES_MNG", "SCL", 1434, FB, "0.1", "", "Benassi", "—", "11/17/2014 09:4..."],
  ["i-lock", "FC6", "DT_DATE", "STL", 136, FC, "1.1", "DT_DATE", "SIMATIC", "Yes", "02/15/1996 04:5..."],
  ["i-lock", "FC8", "DT_TOD", "STL", 166, FC, "1.1", "DT_TOD", "SIMATIC", "Yes", "02/15/1996 04:5..."],
  ["i-block", "FC21", "LEN", "STL", 38, FC, "1.1", "LEN", "SIMATIC", "Yes", "02/15/1996 04:5..."],
  ["i-block", "FC22", "SYC_FC_TON_D_ms_DD", "LAD", 170, FC, "0.1", "TOND_MS", "PASTO...", "—", "06/12/2007 05:4..."],
  ["i-block", "FC23", "SYC_FC_TOFF_D_ms_DD", "LAD", 174, FC, "0.1", "TOFD_MS", "PASTO...", "—", "06/12/2007 05:4..."],
  ["i-block", "FC24", "SYC_FC_PLS_T_ms_DD", "LAD", 172, FC, "0.1", "PLST_MS", "PASTO...", "—", "06/12/2007 05:4..."],
  ["i-block", "FC25", "SYC_FC_EXP_T_ms_DD", "LAD", 178, FC, "0.1", "EXPT_MS", "PASTO...", "—", "06/12/2007 05:4..."],
  ["i-lock", "FC34", "SB_DT_DT", "STL", 188, FC, "1.0", "SB_DT_DT", "SIMATIC", "Yes", "02/15/1996 04:5..."],
  ["i-block", "FC48", "SYC_FC_ET200S_1SSI_FST", "LAD", 206, FC, "0.1", "", "DA_Lib", "—", "11/18/2003 05:5..."],
  ["i-block", "FC85", "SYS_FC_PERM31_ENH", "LAD", 982, FC, "0.1", "", "Olivotto", "—", "08/06/2010 05:2..."],
  ["i-block", "FC110", "SYC_FC_RAMP", "LAD", 372, FC, "0.0", "", "DA_Lib", "—", "12/11/2002 10:0..."],
  ["i-block", "FC111", "SYC_FC_LOW_PASS_FILTER", "STL", 136, FC, "0.0", "", "DA_Lib", "—", "12/11/2002 10:0..."],
  ["i-block", "FC120", "SYC_FC_DATA_MOVE", "STL", 288, FC, "0.0", "", "DA_Lib", "—", "04/06/1999 04:3..."],
  ["i-block", "FC153", "RM_COMM_FC", "LAD", 414, FC, "0.0", "", "", "—", "10/11/2001 03:4..."],
  ["i-block", "FC253", "DIA_FC_PNIO_DP_STS", "SCL", 1390, FC, "1.0", "", "SavaM", "—", "11/20/2013 09:4..."],
  ["i-block", "FC254", "DIA_FC_PNIO_DP_SYS_STS", "SCL", 2214, FC, "1.0", "", "SavaM", "—", "11/20/2013 11:5..."],
  ["i-block", "FC291", "TRK_POS_EDIT", "SCL", 3428, FC, "0.0", "", "", "—", "06/09/2014 11:4..."],
  ["i-block", "FC354", "TRK_CIRC_BFR_MNG", "SCL", 688, FC, "0.0", "", "", "—", "11/25/2014 05:4..."],
  ["i-block", "FC356", "ALARMS_HANDLING_FC", "STL", 754, FC, "0.1", "", "", "—", "08/24/2010 12:1..."],
  ["i-block", "FC387", "LPD_FC_PERM15_ENH_EB", "LAD", 766, FC, "4.0", "", "Olivotto", "—", "12/02/2010 02:2..."],
  ["i-block", "FC388", "LPD_FC_PERM31_ENH_EB", "LAD", 1036, FC, "4.0", "", "Olivotto", "—", "12/02/2010 05:2..."],
  ["i-block", "FC800", "COM_FC_POSIT", "LAD", 1078, FC, "5.0", "", "Crainich", "—", "10/07/2010 04:1..."],
  ["i-block", "FC801", "LIB_BLKMOV", "STL", 216, FC, "0.1", "", "", "—", "10/27/1999 12:0..."],
  ["i-block", "FC802", "LIB_MS_SYN", "STL", 2508, FC, "0.1", "", "", "—", "10/03/2011 09:4..."],
  ["i-block", "FC803", "LIB_SEQUENCER", "SCL", 31624, FC, "0.1", "", "", "—", "05/29/2014 02:1..."],
  ["i-block", "FC805", "LIB_CALIB_FC", "LAD", 1942, FC, "0.1", "", "", "—", "09/20/2010 03:4..."],
  ["i-block", "FC806", "LIB_CALIB2_FC", "LAD", 1814, FC, "0.1", "", "", "—", "10/08/2013 10:4..."],
  ["i-block", "FC809", "LIB_SINGLE_RAMP_TIME", "STL", 144, FC, "0.1", "", "", "—", "09/29/2010 05:5..."],
  ["i-block", "FC810", "LIB_CreateAny", "LAD", 994, FC, "0.1", "", "Agostino", "—", "03/05/2011 10:2..."],
  ["i-block", "FC811", "LIB_SPDREF_CALC", "LAD", 132, FC, "0.1", "", "", "—", "02/01/2013 09:4..."],
];

// the system data entry has no block header, so every header column is a dash
blocks.unshift(["i-sys", "System data", "—", "—", "—", "SDB", "—", "—", "—", "—", "—"]);

document.getElementById("blockRows").innerHTML = blocks
  .map(([icon, object, symbol, lang, size, type, version, name, author, standard, date]) => `
    <tr${object === "FC22" ? ' class="current"' : ""}>
      <td class="object"><svg><use href="#${icon}" /></svg><span>${object}</span></td>
      <td>${symbol}</td><td>${lang}</td><td class="size">${size}</td><td>${type}</td>
      <td>${version}</td><td>${name}</td><td>—</td><td>${author}</td><td>—</td>
      <td>${standard}</td><td>${date}</td><td>—</td>
    </tr>`)
  .join("");
```
